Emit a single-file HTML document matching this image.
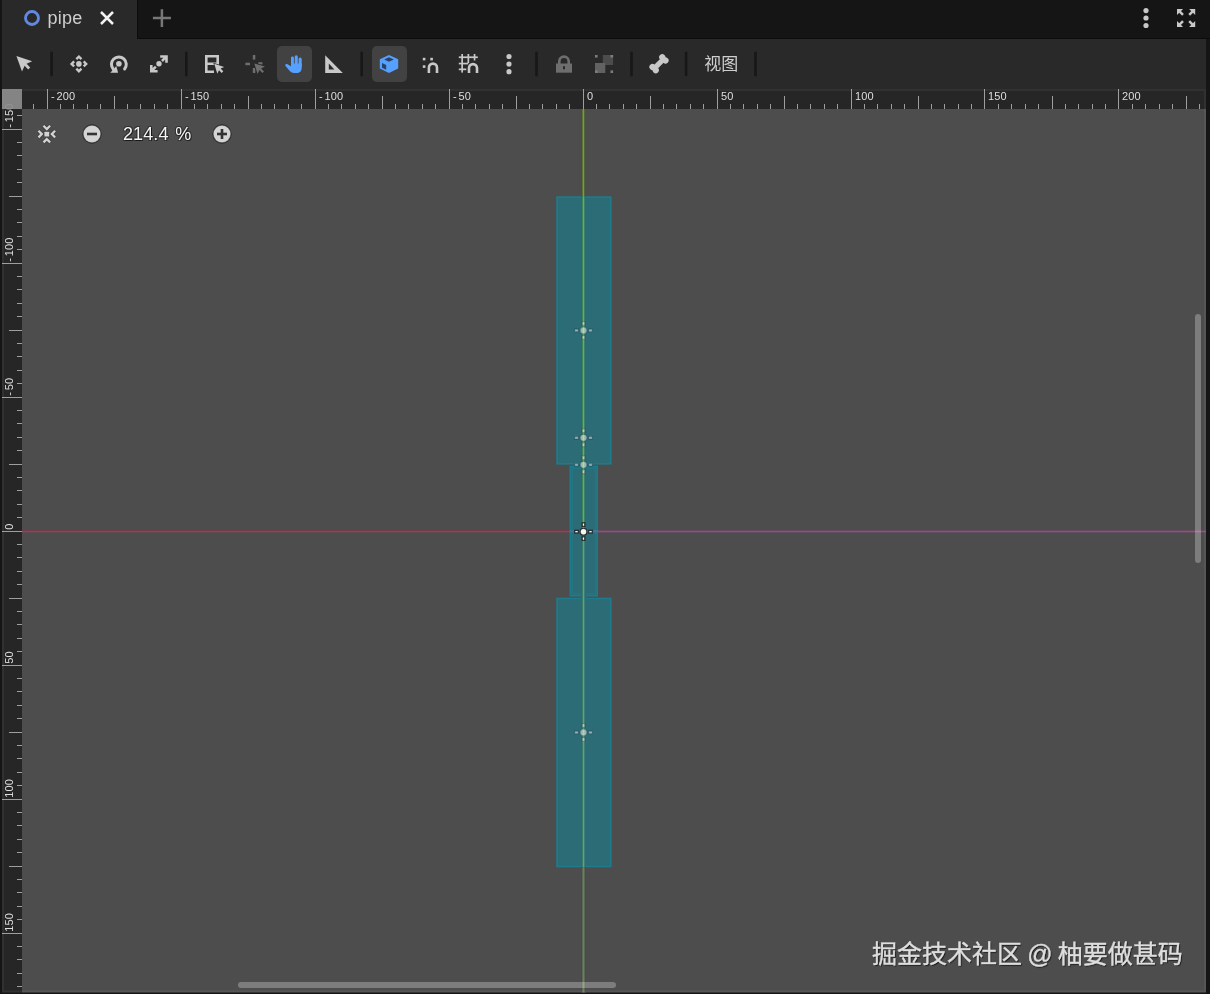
<!DOCTYPE html><html lang="zh"><head><meta charset="utf-8"><title>pipe</title><style>
html,body{margin:0;padding:0}
body{width:1210px;height:994px;background:#151515;position:relative;overflow:hidden;font-family:"Liberation Sans","Noto Sans CJK SC",sans-serif;color:#cdcdcd}
.abs{position:absolute}
#root{position:absolute;left:0;top:0;width:1210px;height:994px;will-change:transform}
#tab{left:2px;top:0;width:135px;height:39px;background:#292929}
#tabline{left:137px;top:0;width:1073px;height:39px;box-sizing:border-box;border-left:1px solid #0c0c0c;border-bottom:1px solid #0c0c0c}
#tabtxt{left:47.4px;top:7px;font-size:18px;line-height:22px;color:#cfcfcf;letter-spacing:.25px}
#toolbar{left:2px;top:39px;width:1204px;height:50px;background:#292929}
.sep{position:absolute;top:52px;width:3px;height:24px;background:#171717;border-radius:1px}
.btn{position:absolute;top:46px;height:36px;width:35px;background:#424242;border-radius:5px}
#viewtxt{left:704.3px;top:52.7px;font-size:17px;line-height:24px;color:#cfcfcf}
#zoomtxt{left:123px;top:122.4px;word-spacing:1.5px;letter-spacing:.1px;font-size:18px;line-height:24px;color:#f4f4f4;text-shadow:1px 1px 0 rgba(0,0,0,.55),-1px -1px 0 rgba(0,0,0,.3),1px -1px 0 rgba(0,0,0,.3),-1px 1px 0 rgba(0,0,0,.3)}
#wm{left:872px;top:937px;word-spacing:-1.7px;font-size:25px;line-height:34px;color:#dedede;-webkit-text-stroke:.4px #dedede;white-space:nowrap;text-shadow:1px 1px 1px rgba(0,0,0,.65)}
svg{position:absolute;left:0;top:0;overflow:visible}
svg text{letter-spacing:.15px;font-family:"Liberation Sans","Noto Sans CJK SC",sans-serif}

</style></head><body><div id="root">
<div class="abs" id="tab"></div><div class="abs" id="tabline"></div>
<div class="abs" id="tabtxt">pipe</div>
<div class="abs" id="toolbar"></div>
<div class="btn" style="left:277px"></div><div class="btn" style="left:372px"></div>
<div class="abs" id="viewtxt">视图</div>
<svg width="1210" height="994" viewBox="0 0 1210 994">
<rect x="22" y="109" width="1184" height="883.5" fill="#4d4d4d"/>
<g id="axes">
<rect x="569" y="530.2" width="14.5" height="2.2" fill="#8c4f64"/>
<rect x="583.5" y="530.2" width="15" height="2.2" fill="#85588a"/>
<rect x="22" y="529" width="547.6" height="1" fill="#53484b"/>
<rect x="22" y="530" width="547.6" height="1" fill="#743c4c"/>
<rect x="22" y="531" width="547.6" height="1" fill="#86495c"/>
<rect x="22" y="532" width="547.6" height="1" fill="#5f4a4e"/>
<rect x="22" y="533" width="547.6" height="1" fill="#504c4c"/>
<rect x="598.1" y="530" width="607.9" height="1" fill="#6c4962"/>
<rect x="598.1" y="531" width="607.9" height="1" fill="#845678"/>
<rect x="598.1" y="532" width="607.9" height="1" fill="#644c62"/>
<rect x="598.1" y="533" width="607.9" height="1" fill="#544850"/>
</g>
<rect x="556.3" y="196.3" width="55.2" height="268.3" fill="rgba(0,153,179,0.42)"/>
<rect x="557.05" y="197.05" width="53.7" height="266.8" fill="none" stroke="rgba(0,158,186,0.30)" stroke-width="1.5"/>
<rect x="569.6" y="465.7" width="28.5" height="130.8" fill="rgba(0,153,179,0.42)"/>
<rect x="570.35" y="466.45" width="27" height="129.3" fill="none" stroke="rgba(0,158,186,0.30)" stroke-width="1.5"/>
<rect x="556.3" y="597.7" width="55.2" height="269.6" fill="rgba(0,153,179,0.42)"/>
<rect x="557.05" y="598.45" width="53.7" height="268.1" fill="none" stroke="rgba(0,158,186,0.30)" stroke-width="1.5"/>
<rect x="572.3" y="468.4" width="23.1" height="125.4" fill="none" stroke="rgba(0,160,190,0.2)" stroke-width="1.3"/>
<rect x="581" y="109" width="1" height="87.3" fill="#454e40"/>
<rect x="582" y="109" width="1" height="87.3" fill="#5a7630"/>
<rect x="583" y="109" width="1" height="87.3" fill="#82983f"/>
<rect x="584" y="109" width="1" height="87.3" fill="#56623e"/>
<rect x="585" y="109" width="1" height="87.3" fill="#4c4f44"/>
<rect x="581" y="196.3" width="1" height="334.7" fill="#2c6b6c"/>
<rect x="582" y="196.3" width="1" height="334.7" fill="#3d8656"/>
<rect x="583" y="196.3" width="1" height="334.7" fill="#60b06a"/>
<rect x="584" y="196.3" width="1" height="334.7" fill="#3f8068"/>
<rect x="585" y="196.3" width="1" height="334.7" fill="#2c6c6c"/>
<rect x="581" y="531" width="1" height="336.3" fill="#2c6b72"/>
<rect x="582" y="531" width="1" height="336.3" fill="#3b8066"/>
<rect x="583" y="531" width="1" height="336.3" fill="#5aa67c"/>
<rect x="584" y="531" width="1" height="336.3" fill="#3f7e76"/>
<rect x="585" y="531" width="1" height="336.3" fill="#2e6c72"/>
<rect x="581" y="867.3" width="1" height="125.2" fill="#444c4c"/>
<rect x="582" y="867.3" width="1" height="125.2" fill="#566a54"/>
<rect x="583" y="867.3" width="1" height="125.2" fill="#6e8064"/>
<rect x="584" y="867.3" width="1" height="125.2" fill="#5e6654"/>
<rect x="585" y="867.3" width="1" height="125.2" fill="#484c42"/>
<g transform="translate(583.5 330.4) scale(1.25)" fill="#fff" fill-opacity="0.5" stroke="#000" stroke-opacity="0.2" stroke-width="1">
<circle r="2.7"/><path d="M-1 -7h2v2.8h-2zM-1 4.2h2v2.8h-2zM-7 -1h2.8v2h-2.8zM4.2 -1h2.8v2h-2.8z"/></g>
<g transform="translate(583.5 437.8) scale(1.25)" fill="#fff" fill-opacity="0.5" stroke="#000" stroke-opacity="0.2" stroke-width="1">
<circle r="2.7"/><path d="M-1 -7h2v2.8h-2zM-1 4.2h2v2.8h-2zM-7 -1h2.8v2h-2.8zM4.2 -1h2.8v2h-2.8z"/></g>
<g transform="translate(583.5 464.8) scale(1.25)" fill="#fff" fill-opacity="0.5" stroke="#000" stroke-opacity="0.2" stroke-width="1">
<circle r="2.7"/><path d="M-1 -7h2v2.8h-2zM-1 4.2h2v2.8h-2zM-7 -1h2.8v2h-2.8zM4.2 -1h2.8v2h-2.8z"/></g>
<g transform="translate(583.5 732.4) scale(1.25)" fill="#fff" fill-opacity="0.5" stroke="#000" stroke-opacity="0.2" stroke-width="1">
<circle r="2.7"/><path d="M-1 -7h2v2.8h-2zM-1 4.2h2v2.8h-2zM-7 -1h2.8v2h-2.8zM4.2 -1h2.8v2h-2.8z"/></g>
<g transform="translate(583.5 531.7) scale(1.25)" fill="#fff" fill-opacity="0.93" stroke="#000" stroke-opacity="0.72" stroke-width="1">
<circle r="2.7"/><path d="M-1 -7h2v2.8h-2zM-1 4.2h2v2.8h-2zM-7 -1h2.8v2h-2.8zM4.2 -1h2.8v2h-2.8z"/></g>
<rect x="238" y="982" width="378" height="6" rx="3" fill="rgba(255,255,255,0.27)"/>
<rect x="1195" y="314" width="6" height="249" rx="3" fill="rgba(255,255,255,0.27)"/>
<g id="hruler">
<rect x="2" y="89" width="1204" height="20" fill="#262626"/>
<rect x="33" y="104" width="1" height="5" fill="#9e9e9e"/>
<rect x="47" y="89" width="1" height="20" fill="#9e9e9e"/>
<text x="51" y="100" font-size="11" fill="#dedede">-<tspan dx="1.6">200</tspan></text>
<rect x="60" y="104" width="1" height="5" fill="#9e9e9e"/>
<rect x="73" y="104" width="1" height="5" fill="#9e9e9e"/>
<rect x="87" y="104" width="1" height="5" fill="#9e9e9e"/>
<rect x="100" y="104" width="1" height="5" fill="#9e9e9e"/>
<rect x="114" y="96" width="1" height="13" fill="#9e9e9e"/>
<rect x="127" y="104" width="1" height="5" fill="#9e9e9e"/>
<rect x="140" y="104" width="1" height="5" fill="#9e9e9e"/>
<rect x="154" y="104" width="1" height="5" fill="#9e9e9e"/>
<rect x="167" y="104" width="1" height="5" fill="#9e9e9e"/>
<rect x="181" y="89" width="1" height="20" fill="#9e9e9e"/>
<text x="185" y="100" font-size="11" fill="#dedede">-<tspan dx="1.6">150</tspan></text>
<rect x="194" y="104" width="1" height="5" fill="#9e9e9e"/>
<rect x="207" y="104" width="1" height="5" fill="#9e9e9e"/>
<rect x="221" y="104" width="1" height="5" fill="#9e9e9e"/>
<rect x="234" y="104" width="1" height="5" fill="#9e9e9e"/>
<rect x="248" y="96" width="1" height="13" fill="#9e9e9e"/>
<rect x="261" y="104" width="1" height="5" fill="#9e9e9e"/>
<rect x="274" y="104" width="1" height="5" fill="#9e9e9e"/>
<rect x="288" y="104" width="1" height="5" fill="#9e9e9e"/>
<rect x="301" y="104" width="1" height="5" fill="#9e9e9e"/>
<rect x="315" y="89" width="1" height="20" fill="#9e9e9e"/>
<text x="319" y="100" font-size="11" fill="#dedede">-<tspan dx="1.6">100</tspan></text>
<rect x="328" y="104" width="1" height="5" fill="#9e9e9e"/>
<rect x="341" y="104" width="1" height="5" fill="#9e9e9e"/>
<rect x="355" y="104" width="1" height="5" fill="#9e9e9e"/>
<rect x="368" y="104" width="1" height="5" fill="#9e9e9e"/>
<rect x="382" y="96" width="1" height="13" fill="#9e9e9e"/>
<rect x="395" y="104" width="1" height="5" fill="#9e9e9e"/>
<rect x="408" y="104" width="1" height="5" fill="#9e9e9e"/>
<rect x="422" y="104" width="1" height="5" fill="#9e9e9e"/>
<rect x="435" y="104" width="1" height="5" fill="#9e9e9e"/>
<rect x="449" y="89" width="1" height="20" fill="#9e9e9e"/>
<text x="453" y="100" font-size="11" fill="#dedede">-<tspan dx="1.6">50</tspan></text>
<rect x="462" y="104" width="1" height="5" fill="#9e9e9e"/>
<rect x="475" y="104" width="1" height="5" fill="#9e9e9e"/>
<rect x="489" y="104" width="1" height="5" fill="#9e9e9e"/>
<rect x="502" y="104" width="1" height="5" fill="#9e9e9e"/>
<rect x="516" y="96" width="1" height="13" fill="#9e9e9e"/>
<rect x="529" y="104" width="1" height="5" fill="#9e9e9e"/>
<rect x="542" y="104" width="1" height="5" fill="#9e9e9e"/>
<rect x="556" y="104" width="1" height="5" fill="#9e9e9e"/>
<rect x="569" y="104" width="1" height="5" fill="#9e9e9e"/>
<rect x="583" y="89" width="1" height="20" fill="#9e9e9e"/>
<text x="587" y="100" font-size="11" fill="#dedede">0</text>
<rect x="596" y="104" width="1" height="5" fill="#9e9e9e"/>
<rect x="609" y="104" width="1" height="5" fill="#9e9e9e"/>
<rect x="623" y="104" width="1" height="5" fill="#9e9e9e"/>
<rect x="636" y="104" width="1" height="5" fill="#9e9e9e"/>
<rect x="650" y="96" width="1" height="13" fill="#9e9e9e"/>
<rect x="663" y="104" width="1" height="5" fill="#9e9e9e"/>
<rect x="676" y="104" width="1" height="5" fill="#9e9e9e"/>
<rect x="690" y="104" width="1" height="5" fill="#9e9e9e"/>
<rect x="703" y="104" width="1" height="5" fill="#9e9e9e"/>
<rect x="717" y="89" width="1" height="20" fill="#9e9e9e"/>
<text x="721" y="100" font-size="11" fill="#dedede">50</text>
<rect x="730" y="104" width="1" height="5" fill="#9e9e9e"/>
<rect x="743" y="104" width="1" height="5" fill="#9e9e9e"/>
<rect x="757" y="104" width="1" height="5" fill="#9e9e9e"/>
<rect x="770" y="104" width="1" height="5" fill="#9e9e9e"/>
<rect x="784" y="96" width="1" height="13" fill="#9e9e9e"/>
<rect x="797" y="104" width="1" height="5" fill="#9e9e9e"/>
<rect x="810" y="104" width="1" height="5" fill="#9e9e9e"/>
<rect x="824" y="104" width="1" height="5" fill="#9e9e9e"/>
<rect x="837" y="104" width="1" height="5" fill="#9e9e9e"/>
<rect x="851" y="89" width="1" height="20" fill="#9e9e9e"/>
<text x="855" y="100" font-size="11" fill="#dedede">100</text>
<rect x="864" y="104" width="1" height="5" fill="#9e9e9e"/>
<rect x="877" y="104" width="1" height="5" fill="#9e9e9e"/>
<rect x="891" y="104" width="1" height="5" fill="#9e9e9e"/>
<rect x="904" y="104" width="1" height="5" fill="#9e9e9e"/>
<rect x="918" y="96" width="1" height="13" fill="#9e9e9e"/>
<rect x="931" y="104" width="1" height="5" fill="#9e9e9e"/>
<rect x="944" y="104" width="1" height="5" fill="#9e9e9e"/>
<rect x="958" y="104" width="1" height="5" fill="#9e9e9e"/>
<rect x="971" y="104" width="1" height="5" fill="#9e9e9e"/>
<rect x="984" y="89" width="1" height="20" fill="#9e9e9e"/>
<text x="988" y="100" font-size="11" fill="#dedede">150</text>
<rect x="998" y="104" width="1" height="5" fill="#9e9e9e"/>
<rect x="1011" y="104" width="1" height="5" fill="#9e9e9e"/>
<rect x="1025" y="104" width="1" height="5" fill="#9e9e9e"/>
<rect x="1038" y="104" width="1" height="5" fill="#9e9e9e"/>
<rect x="1052" y="96" width="1" height="13" fill="#9e9e9e"/>
<rect x="1065" y="104" width="1" height="5" fill="#9e9e9e"/>
<rect x="1078" y="104" width="1" height="5" fill="#9e9e9e"/>
<rect x="1092" y="104" width="1" height="5" fill="#9e9e9e"/>
<rect x="1105" y="104" width="1" height="5" fill="#9e9e9e"/>
<rect x="1118" y="89" width="1" height="20" fill="#9e9e9e"/>
<text x="1122" y="100" font-size="11" fill="#dedede">200</text>
<rect x="1132" y="104" width="1" height="5" fill="#9e9e9e"/>
<rect x="1145" y="104" width="1" height="5" fill="#9e9e9e"/>
<rect x="1159" y="104" width="1" height="5" fill="#9e9e9e"/>
<rect x="1172" y="104" width="1" height="5" fill="#9e9e9e"/>
<rect x="1186" y="96" width="1" height="13" fill="#9e9e9e"/>
<rect x="1199" y="104" width="1" height="5" fill="#9e9e9e"/>
</g>
<g id="vruler">
<rect x="2" y="109" width="20" height="883.5" fill="#262626"/>
<rect x="17" y="115" width="5" height="1" fill="#9e9e9e"/>
<text transform="translate(12.7 127.7) rotate(-90)" font-size="11" fill="#dedede">-<tspan dx="1.6">150</tspan></text>
<rect x="2" y="129" width="20" height="1" fill="#9e9e9e"/>
<rect x="17" y="142" width="5" height="1" fill="#9e9e9e"/>
<rect x="17" y="155" width="5" height="1" fill="#9e9e9e"/>
<rect x="17" y="169" width="5" height="1" fill="#9e9e9e"/>
<rect x="17" y="182" width="5" height="1" fill="#9e9e9e"/>
<rect x="9" y="196" width="13" height="1" fill="#9e9e9e"/>
<rect x="17" y="209" width="5" height="1" fill="#9e9e9e"/>
<rect x="17" y="222" width="5" height="1" fill="#9e9e9e"/>
<rect x="17" y="236" width="5" height="1" fill="#9e9e9e"/>
<rect x="17" y="249" width="5" height="1" fill="#9e9e9e"/>
<text transform="translate(12.7 261.7) rotate(-90)" font-size="11" fill="#dedede">-<tspan dx="1.6">100</tspan></text>
<rect x="2" y="263" width="20" height="1" fill="#9e9e9e"/>
<rect x="17" y="276" width="5" height="1" fill="#9e9e9e"/>
<rect x="17" y="289" width="5" height="1" fill="#9e9e9e"/>
<rect x="17" y="303" width="5" height="1" fill="#9e9e9e"/>
<rect x="17" y="316" width="5" height="1" fill="#9e9e9e"/>
<rect x="9" y="330" width="13" height="1" fill="#9e9e9e"/>
<rect x="17" y="343" width="5" height="1" fill="#9e9e9e"/>
<rect x="17" y="356" width="5" height="1" fill="#9e9e9e"/>
<rect x="17" y="370" width="5" height="1" fill="#9e9e9e"/>
<rect x="17" y="383" width="5" height="1" fill="#9e9e9e"/>
<text transform="translate(12.7 395.7) rotate(-90)" font-size="11" fill="#dedede">-<tspan dx="1.6">50</tspan></text>
<rect x="2" y="397" width="20" height="1" fill="#9e9e9e"/>
<rect x="17" y="410" width="5" height="1" fill="#9e9e9e"/>
<rect x="17" y="423" width="5" height="1" fill="#9e9e9e"/>
<rect x="17" y="437" width="5" height="1" fill="#9e9e9e"/>
<rect x="17" y="450" width="5" height="1" fill="#9e9e9e"/>
<rect x="9" y="464" width="13" height="1" fill="#9e9e9e"/>
<rect x="17" y="477" width="5" height="1" fill="#9e9e9e"/>
<rect x="17" y="490" width="5" height="1" fill="#9e9e9e"/>
<rect x="17" y="504" width="5" height="1" fill="#9e9e9e"/>
<rect x="17" y="517" width="5" height="1" fill="#9e9e9e"/>
<text transform="translate(12.7 529.7) rotate(-90)" font-size="11" fill="#dedede">0</text>
<rect x="2" y="531" width="20" height="1" fill="#9e9e9e"/>
<rect x="17" y="544" width="5" height="1" fill="#9e9e9e"/>
<rect x="17" y="557" width="5" height="1" fill="#9e9e9e"/>
<rect x="17" y="571" width="5" height="1" fill="#9e9e9e"/>
<rect x="17" y="584" width="5" height="1" fill="#9e9e9e"/>
<rect x="9" y="598" width="13" height="1" fill="#9e9e9e"/>
<rect x="17" y="611" width="5" height="1" fill="#9e9e9e"/>
<rect x="17" y="624" width="5" height="1" fill="#9e9e9e"/>
<rect x="17" y="638" width="5" height="1" fill="#9e9e9e"/>
<rect x="17" y="651" width="5" height="1" fill="#9e9e9e"/>
<text transform="translate(12.7 663.7) rotate(-90)" font-size="11" fill="#dedede">50</text>
<rect x="2" y="665" width="20" height="1" fill="#9e9e9e"/>
<rect x="17" y="678" width="5" height="1" fill="#9e9e9e"/>
<rect x="17" y="691" width="5" height="1" fill="#9e9e9e"/>
<rect x="17" y="705" width="5" height="1" fill="#9e9e9e"/>
<rect x="17" y="718" width="5" height="1" fill="#9e9e9e"/>
<rect x="9" y="732" width="13" height="1" fill="#9e9e9e"/>
<rect x="17" y="745" width="5" height="1" fill="#9e9e9e"/>
<rect x="17" y="758" width="5" height="1" fill="#9e9e9e"/>
<rect x="17" y="772" width="5" height="1" fill="#9e9e9e"/>
<rect x="17" y="785" width="5" height="1" fill="#9e9e9e"/>
<text transform="translate(12.7 797.7) rotate(-90)" font-size="11" fill="#dedede">100</text>
<rect x="2" y="799" width="20" height="1" fill="#9e9e9e"/>
<rect x="17" y="812" width="5" height="1" fill="#9e9e9e"/>
<rect x="17" y="825" width="5" height="1" fill="#9e9e9e"/>
<rect x="17" y="839" width="5" height="1" fill="#9e9e9e"/>
<rect x="17" y="852" width="5" height="1" fill="#9e9e9e"/>
<rect x="9" y="866" width="13" height="1" fill="#9e9e9e"/>
<rect x="17" y="879" width="5" height="1" fill="#9e9e9e"/>
<rect x="17" y="892" width="5" height="1" fill="#9e9e9e"/>
<rect x="17" y="906" width="5" height="1" fill="#9e9e9e"/>
<rect x="17" y="919" width="5" height="1" fill="#9e9e9e"/>
<text transform="translate(12.7 931.7) rotate(-90)" font-size="11" fill="#dedede">150</text>
<rect x="2" y="933" width="20" height="1" fill="#9e9e9e"/>
<rect x="17" y="946" width="5" height="1" fill="#9e9e9e"/>
<rect x="17" y="959" width="5" height="1" fill="#9e9e9e"/>
<rect x="17" y="973" width="5" height="1" fill="#9e9e9e"/>
<rect x="17" y="986" width="5" height="1" fill="#9e9e9e"/>
</g>
<rect x="3" y="90" width="1202" height="901.5" fill="none" stroke="rgba(255,255,255,0.055)" stroke-width="2"/>
<rect x="2" y="89" width="20" height="20" fill="rgba(140,140,140,0.93)"/>
<g id="icons">
<circle cx="32" cy="18" r="6.5" fill="none" stroke="#6288df" stroke-width="2.9"/>
<path d="M101 12l12 12M113 12l-12 12" stroke="#f2f2f2" stroke-width="2.5" fill="none"/>
<path d="M152.9 18.1h18M161.9 9.2v17.8" stroke="#787878" stroke-width="2.5" fill="none"/>
<circle cx="1146" cy="10.6" r="2.6" fill="#c8c8c8"/>
<circle cx="1146" cy="18" r="2.6" fill="#c8c8c8"/>
<circle cx="1146" cy="25.5" r="2.6" fill="#c8c8c8"/>
<g fill="#c8c8c8" stroke="#c8c8c8" stroke-width="2.5">
<g transform="translate(1186.1 18) scale(-1 -1)"><path d="M3.1 3.1L6.6 6.6" fill="none"/><path d="M9.1 3V9.1H3z" stroke="none"/></g>
<g transform="translate(1186.1 18) scale(1 -1)"><path d="M3.1 3.1L6.6 6.6" fill="none"/><path d="M9.1 3V9.1H3z" stroke="none"/></g>
<g transform="translate(1186.1 18) scale(-1 1)"><path d="M3.1 3.1L6.6 6.6" fill="none"/><path d="M9.1 3V9.1H3z" stroke="none"/></g>
<g transform="translate(1186.1 18) scale(1 1)"><path d="M3.1 3.1L6.6 6.6" fill="none"/><path d="M9.1 3V9.1H3z" stroke="none"/></g>
</g>
<rect x="50.3" y="51.8" width="2.6" height="24.4" rx=".8" fill="#171717"/>
<rect x="185" y="51.8" width="2.6" height="24.4" rx=".8" fill="#171717"/>
<rect x="360.4" y="51.8" width="2.6" height="24.4" rx=".8" fill="#171717"/>
<rect x="535.2" y="51.8" width="2.6" height="24.4" rx=".8" fill="#171717"/>
<rect x="630.2" y="51.8" width="2.6" height="24.4" rx=".8" fill="#171717"/>
<rect x="684.8" y="51.8" width="2.6" height="24.4" rx=".8" fill="#171717"/>
<rect x="754.2" y="51.8" width="2.6" height="24.4" rx=".8" fill="#171717"/>
<path d="M16.4 56l5.6 15.4 2.6-5.6 3.6 3.6 2-2-3.6-3.6 5.6-2.6z" fill="#c8c8c8"/>
<g fill="#c8c8c8"><circle cx="78.9" cy="63.9" r="2.8"/>
<path transform="translate(78.9 63.9) rotate(0)" d="M0 -9l3.4 3.4-1.7 1.7L0 -5.6l-1.7 1.7-1.7-1.7z"/>
<path transform="translate(78.9 63.9) rotate(90)" d="M0 -9l3.4 3.4-1.7 1.7L0 -5.6l-1.7 1.7-1.7-1.7z"/>
<path transform="translate(78.9 63.9) rotate(180)" d="M0 -9l3.4 3.4-1.7 1.7L0 -5.6l-1.7 1.7-1.7-1.7z"/>
<path transform="translate(78.9 63.9) rotate(270)" d="M0 -9l3.4 3.4-1.7 1.7L0 -5.6l-1.7 1.7-1.7-1.7z"/>
</g>
<path d="M124.6 69A7.4 7.4 0 1 0 113.3 69.2" fill="none" stroke="#c8c8c8" stroke-width="3" stroke-linecap="round"/>
<circle cx="118.9" cy="63.8" r="2.8" fill="#c8c8c8"/><path d="M110.3 72.8h7.8l-1.8-6.8z" fill="#c8c8c8"/>
<g fill="#c8c8c8"><circle cx="159" cy="63.8" r="2.7"/><path d="M160.2 55.2h7.6v7.6h-2.6v-3.2l-2.3 2.3-1.8-1.8 2.3-2.3h-3.2zM157.6 72.5H150v-7.6h2.6v3.2l2.3-2.3 1.8 1.8-2.3 2.3h3.2z"/></g>
<g fill="#c8c8c8"><path d="M205 55h14v10h-11.4v5.4h6.4v2.6H205zM207.6 57.6v4.9h8.8v-4.9z" fill-rule="evenodd"/><path d="M214.3 63.8l3 10 1.7-3.6 2.7 2.7 1.6-1.6-2.7-2.7 3.6-1.7z" stroke="#292929" stroke-width="1.3" paint-order="stroke"/></g>
<g fill="#6e6e6e"><rect x="252.8" y="55" width="2.5" height="4.6"/><rect x="245.4" y="62.7" width="4.6" height="2.5"/><rect x="258.4" y="62.2" width="4" height="2.2"/><rect x="252.8" y="68" width="2.5" height="5"/><path d="M254.3 63.4l3.3 10.6 1.9-3.9 2.9 2.9 1.6-1.6-2.9-2.9 3.9-1.9z" stroke="#292929" stroke-width="1.2" paint-order="stroke"/></g>
<g fill="#56a0ff"><rect x="291" y="56.6" width="2.9" height="10" rx="1.4"/><rect x="294.7" y="55.3" width="3.1" height="11" rx="1.5"/><rect x="298.6" y="57.4" width="3.1" height="10" rx="1.5"/><path d="M291 63.5h10.7V68c0 3-2 5-5.2 5h-2.4c-2.4 0-3.6-1.2-5-2.8l-3.6-4.2c-.9-1.1.3-2.5 1.6-1.9l3.9 2.2z"/></g>
<path fill-rule="evenodd" d="M325.2 55.3v17.7h17.6zM328.8 63.6l5.6 5.8h-5.6z" fill="#c8c8c8"/>
<g><path d="M389 54.9l9.2 4.3v9.4l-9.2 4.4-9.2-4.4v-9.4z" fill="#56a0ff"/><path d="M389 57.2l4.8 2.3-4.8 2.3-4.8-2.3z" fill="#2b4263"/><path d="M382 63l4.2 2v4.8l-4.2-2z" fill="#2b4263"/></g>
<g fill="#c8c8c8"><rect x="422.8" y="57.8" width="2.6" height="2.6"/><rect x="430.3" y="57.8" width="2.6" height="2.6"/><rect x="422.8" y="65.3" width="2.6" height="2.6"/></g>
<path d="M428.9 73V67.65a4.05 4.05 0 0 1 8.1 0V73" fill="none" stroke="#c8c8c8" stroke-width="2.6"/>
<g fill="#c8c8c8"><rect x="461.3" y="54" width="1.7" height="18.6"/><rect x="467.5" y="54" width="1.7" height="9"/><rect x="473.7" y="54" width="1.7" height="6.5"/><rect x="458.8" y="56.4" width="19" height="1.7"/><rect x="458.8" y="62.7" width="9.5" height="1.7"/><rect x="458.8" y="68.5" width="7.5" height="1.7"/></g>
<path d="M469 73V68.1a4 4 0 0 1 8 0V73" fill="none" stroke="#c8c8c8" stroke-width="2.6"/>
<circle cx="509" cy="56.5" r="2.6" fill="#c8c8c8"/>
<circle cx="509" cy="64.1" r="2.6" fill="#c8c8c8"/>
<circle cx="509" cy="71.7" r="2.6" fill="#c8c8c8"/>
<g><path d="M556 63.5h16v9.2h-16z" fill="#6e6e6e"/><path d="M559.3 64v-2.7a4.7 4.7 0 0 1 9.4 0V64" fill="none" stroke="#6e6e6e" stroke-width="2.6"/><rect x="563" y="66" width="2" height="3.6" rx="1" fill="#282828"/></g>
<g><rect x="602.8" y="55" width="10.3" height="10" fill="#4c4c4c"/><rect x="595" y="63" width="10.3" height="10" fill="#626262"/>
<rect x="595" y="55" width="2.6" height="2.6" fill="#7c7c7c"/>
<rect x="610.5" y="55" width="2.6" height="2.6" fill="#7c7c7c"/>
<rect x="595" y="70.4" width="2.6" height="2.6" fill="#7c7c7c"/>
<rect x="610.5" y="70.4" width="2.6" height="2.6" fill="#7c7c7c"/>
</g>
<g transform="translate(659 63.7) rotate(-45)" fill="#c8c8c8"><rect x="-7" y="-2.6" width="14" height="5.2"/><circle cx="-6.9" cy="-2.3" r="3.1"/><circle cx="-6.9" cy="2.3" r="3.1"/><circle cx="6.9" cy="-2.3" r="3.1"/><circle cx="6.9" cy="2.3" r="3.1"/></g>
<g>
<path transform="rotate(0 46.8 134.1)" d="M43.5 125.8l3.3 3.3 3.3-3.3" fill="none" stroke="rgba(0,0,0,.22)" stroke-width="4"/>
<path transform="rotate(90 46.8 134.1)" d="M43.5 125.8l3.3 3.3 3.3-3.3" fill="none" stroke="rgba(0,0,0,.22)" stroke-width="4"/>
<path transform="rotate(180 46.8 134.1)" d="M43.5 125.8l3.3 3.3 3.3-3.3" fill="none" stroke="rgba(0,0,0,.22)" stroke-width="4"/>
<path transform="rotate(270 46.8 134.1)" d="M43.5 125.8l3.3 3.3 3.3-3.3" fill="none" stroke="rgba(0,0,0,.22)" stroke-width="4"/>
<rect x="44.4" y="131.7" width="4.8" height="4.8" rx=".6" fill="#d2d2d2" stroke="rgba(0,0,0,.22)" stroke-width="1.4" paint-order="stroke"/>
<path transform="rotate(0 46.8 134.1)" d="M43.5 125.8l3.3 3.3 3.3-3.3" fill="none" stroke="#d2d2d2" stroke-width="2.3"/>
<path transform="rotate(90 46.8 134.1)" d="M43.5 125.8l3.3 3.3 3.3-3.3" fill="none" stroke="#d2d2d2" stroke-width="2.3"/>
<path transform="rotate(180 46.8 134.1)" d="M43.5 125.8l3.3 3.3 3.3-3.3" fill="none" stroke="#d2d2d2" stroke-width="2.3"/>
<path transform="rotate(270 46.8 134.1)" d="M43.5 125.8l3.3 3.3 3.3-3.3" fill="none" stroke="#d2d2d2" stroke-width="2.3"/>
</g>
<circle cx="92" cy="134" r="9" fill="#d4d4d4" stroke="rgba(0,0,0,.5)" stroke-width="1.3"/><rect x="87" y="132.7" width="10" height="2.6" fill="#333"/>
<circle cx="222" cy="134" r="9" fill="#d4d4d4" stroke="rgba(0,0,0,.5)" stroke-width="1.3"/><rect x="217" y="132.7" width="10" height="2.6" fill="#333"/><rect x="220.7" y="129" width="2.6" height="10" fill="#333"/>
</g>
</svg>
<div class="abs" id="zoomtxt">214.4 %</div>
<div class="abs" id="wm">掘金技术社区 @ 柚要做甚码</div>
</div></body></html>
